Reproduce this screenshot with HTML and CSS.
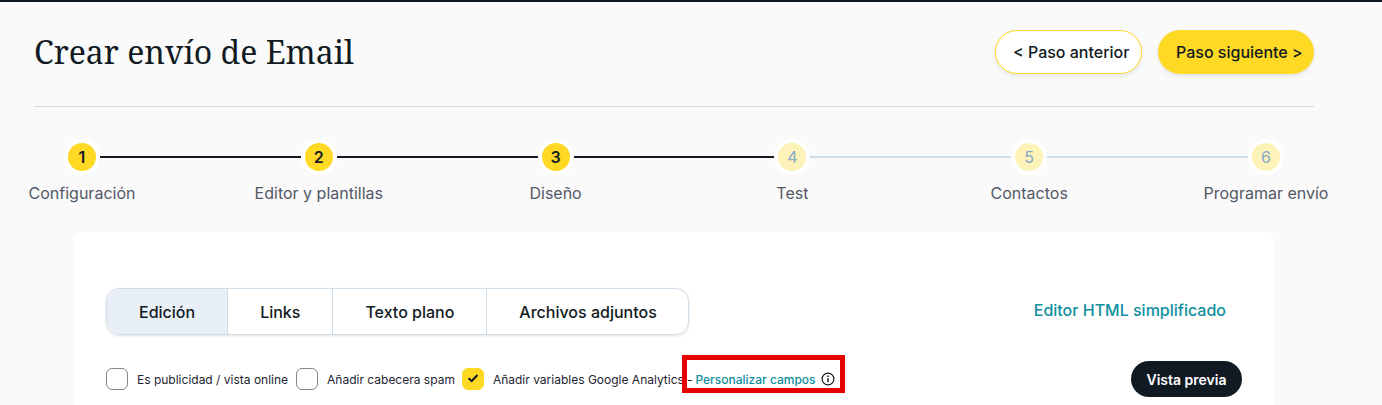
FILE: index.html
```html
<!DOCTYPE html>
<html lang="es">
<head>
<meta charset="utf-8">
<title>Crear envío de Email</title>
<link rel="stylesheet" href="styles.css">
</head>
<body>
<main class="page">
  <header class="head">
    <h1 class="title">Crear envío de Email</h1>
    <div class="head-actions">
      <button class="btn btn-ghost">&lt; Paso anterior</button>
      <button class="btn btn-primary">Paso siguiente &gt;</button>
    </div>
  </header>

  <section class="stepper">
    <div class="track">
      <span class="dot">1</span><span class="line"></span>
      <span class="dot">2</span><span class="line"></span>
      <span class="dot">3</span><span class="line"></span>
      <span class="dot dot-off">4</span><span class="line line-off"></span>
      <span class="dot dot-off">5</span><span class="line line-off"></span>
      <span class="dot dot-off">6</span>
    </div>
    <div class="labels">
      <span class="label">Configuración</span>
      <span class="label">Editor y plantillas</span>
      <span class="label">Diseño</span>
      <span class="label">Test</span>
      <span class="label">Contactos</span>
      <span class="label">Programar envío</span>
    </div>
  </section>

  <section class="card">
    <div class="tab-row">
      <nav class="tabs">
        <a class="tab tab-active">Edición</a>
        <a class="tab">Links</a>
        <a class="tab">Texto plano</a>
        <a class="tab">Archivos adjuntos</a>
      </nav>
      <a class="html-link">Editor HTML simplificado</a>
    </div>
    <div class="options">
      <div class="checks">
        <span class="box"></span><span class="check-label">Es publicidad / vista online</span>
        <span class="box"></span><span class="check-label check-label-tight">Añadir cabecera spam</span>
        <span class="box box-on">
          <svg viewBox="0 0 12 12" width="12" height="12" aria-hidden="true"><path d="M1.5 5.2 4.6 8 10.5 2" fill="none" stroke="#111a22" stroke-width="2"/></svg>
        </span><span class="check-label check-label-last">Añadir variables Google Analytics</span>
        <span class="custom">
          <span class="dash">-</span>
          <a class="custom-link">Personalizar campos</a>
          <svg class="info" viewBox="0 0 14 14" width="14" height="14" aria-hidden="true"><circle cx="7" cy="7" r="5.9" fill="none" stroke="#111a22" stroke-width="1.2"/><path d="M7 6.2V10.2" stroke="#111a22" stroke-width="1.4"/><circle cx="7" cy="4.2" r=".85" fill="#111a22"/></svg>
        </span>
      </div>
      <button class="btn-dark">Vista previa</button>
    </div>
  </section>
</main>
</body>
</html>
```
FILE: styles.css
```css
* { box-sizing: border-box; }
html, body { margin: 0; padding: 0; height: 405px; overflow: hidden; }
body {
  background: #fafafa;
  border-top: 2px solid #111a22;
  font-family: Inter, "Liberation Sans", sans-serif;
  color: #111a22;
}
.page { display: flex; flex-direction: column; }

.head {
  margin: 0 68px 0 34px;
  height: 105px;
  padding-top: 28px;
  border-bottom: 1px solid #cfdcea;
  display: flex;
  justify-content: space-between;
  align-items: flex-start;
}
.title {
  margin: 0;
  font-family: "Noto Serif", "DejaVu Serif", serif;
  font-weight: 400;
  font-size: 32px;
  line-height: 44px;
}
.head-actions { display: flex; gap: 16px; }
.btn {
  height: 44px;
  border-radius: 22px;
  font-family: inherit;
  font-size: 16px;
  font-weight: 500;
  color: #111a22;
  text-align: left;
  white-space: nowrap;
  box-shadow: 0 2px 4px rgba(17, 26, 34, .1);
}
.btn-ghost { width: 147px; padding: 0 0 0 17px; background: #fff; border: 1px solid #ffd923; }
.btn-primary { width: 156px; padding: 0 0 0 18px; background: #ffd923; border: 0; }

.stepper { display: flex; flex-direction: column; }
.track {
  display: flex;
  align-items: center;
  margin: 32px 98px 0 64px;
}
.dot {
  width: 36px;
  height: 36px;
  flex: none;
  border: 4px solid #fff;
  border-radius: 50%;
  background: #ffd923;
  display: flex;
  align-items: center;
  justify-content: center;
  font-size: 16px;
  font-weight: 600;
}
.dot-off { background: #fdf2b8; color: #86a8cc; font-weight: 400; }
.line { flex: 1; height: 2px; background: #111a22; }
.line-off { background: #cfdcea; }
.labels {
  display: flex;
  justify-content: space-between;
  margin: 7px 51px 0 17px;
}
.label {
  width: 130px;
  flex: none;
  text-align: center;
  font-size: 16px;
  line-height: 22px;
  color: #525866;
  white-space: nowrap;
}

.card {
  margin: 28px 108px 0 74px;
  height: 173px;
  padding: 56px 32px 0;
  background: #fff;
  border-radius: 8px 8px 0 0;
}
.tab-row { display: flex; justify-content: space-between; align-items: center; }
.tabs {
  display: flex;
  height: 47px;
  border: 1px solid #cfdcea;
  border-radius: 13px;
  box-shadow: 0 1px 3px rgba(17, 26, 34, .12);
  overflow: hidden;
}
.tab {
  display: flex;
  align-items: center;
  padding: 0 32px;
  font-size: 16px;
  font-weight: 500;
  border-left: 1px solid #cfdcea;
}
.tab:first-child { border-left: 0; }
.tab:last-child { padding-right: 31px; }
.tab-active { background: #e9eff6; }
.html-link { margin-right: 16px; margin-top: -4px; font-size: 16px; font-weight: 500; color: #0e8fa0; }

.options {
  display: flex;
  justify-content: space-between;
  align-items: center;
  margin-top: 26px;
  height: 36px;
}
.checks { display: flex; align-items: center; font-size: 12px; }
.box {
  width: 22px;
  height: 22px;
  flex: none;
  border: 1px solid #888;
  border-radius: 6px;
  background: #fff;
  margin-right: 9px;
  display: flex;
  align-items: center;
  justify-content: center;
}
.box-on { background: #ffd923; border-color: #ffd923; }
.check-label { margin-right: 8px; color: #1c2530; white-space: nowrap; }
.check-label-tight { margin-right: 7px; }
.check-label-last { margin-right: 0; }
.custom {
  position: relative;
  display: flex;
  align-items: center;
  margin-left: 3px;
  white-space: nowrap;
}
.custom::after {
  content: "";
  position: absolute;
  left: -5px;
  right: -10px;
  top: -17px;
  bottom: -6px;
  border: 5px solid #e60000;
}
.dash { margin-right: 3px; }
.custom-link { color: #0e8fa0; font-weight: 500; }
.info { margin-left: 5px; }
.btn-dark {
  width: 111px;
  height: 36px;
  border: 0;
  border-radius: 18px;
  background: #111a22;
  color: #fff;
  font-family: inherit;
  font-size: 14px;
  font-weight: 600;
  padding: 0;
}
```
